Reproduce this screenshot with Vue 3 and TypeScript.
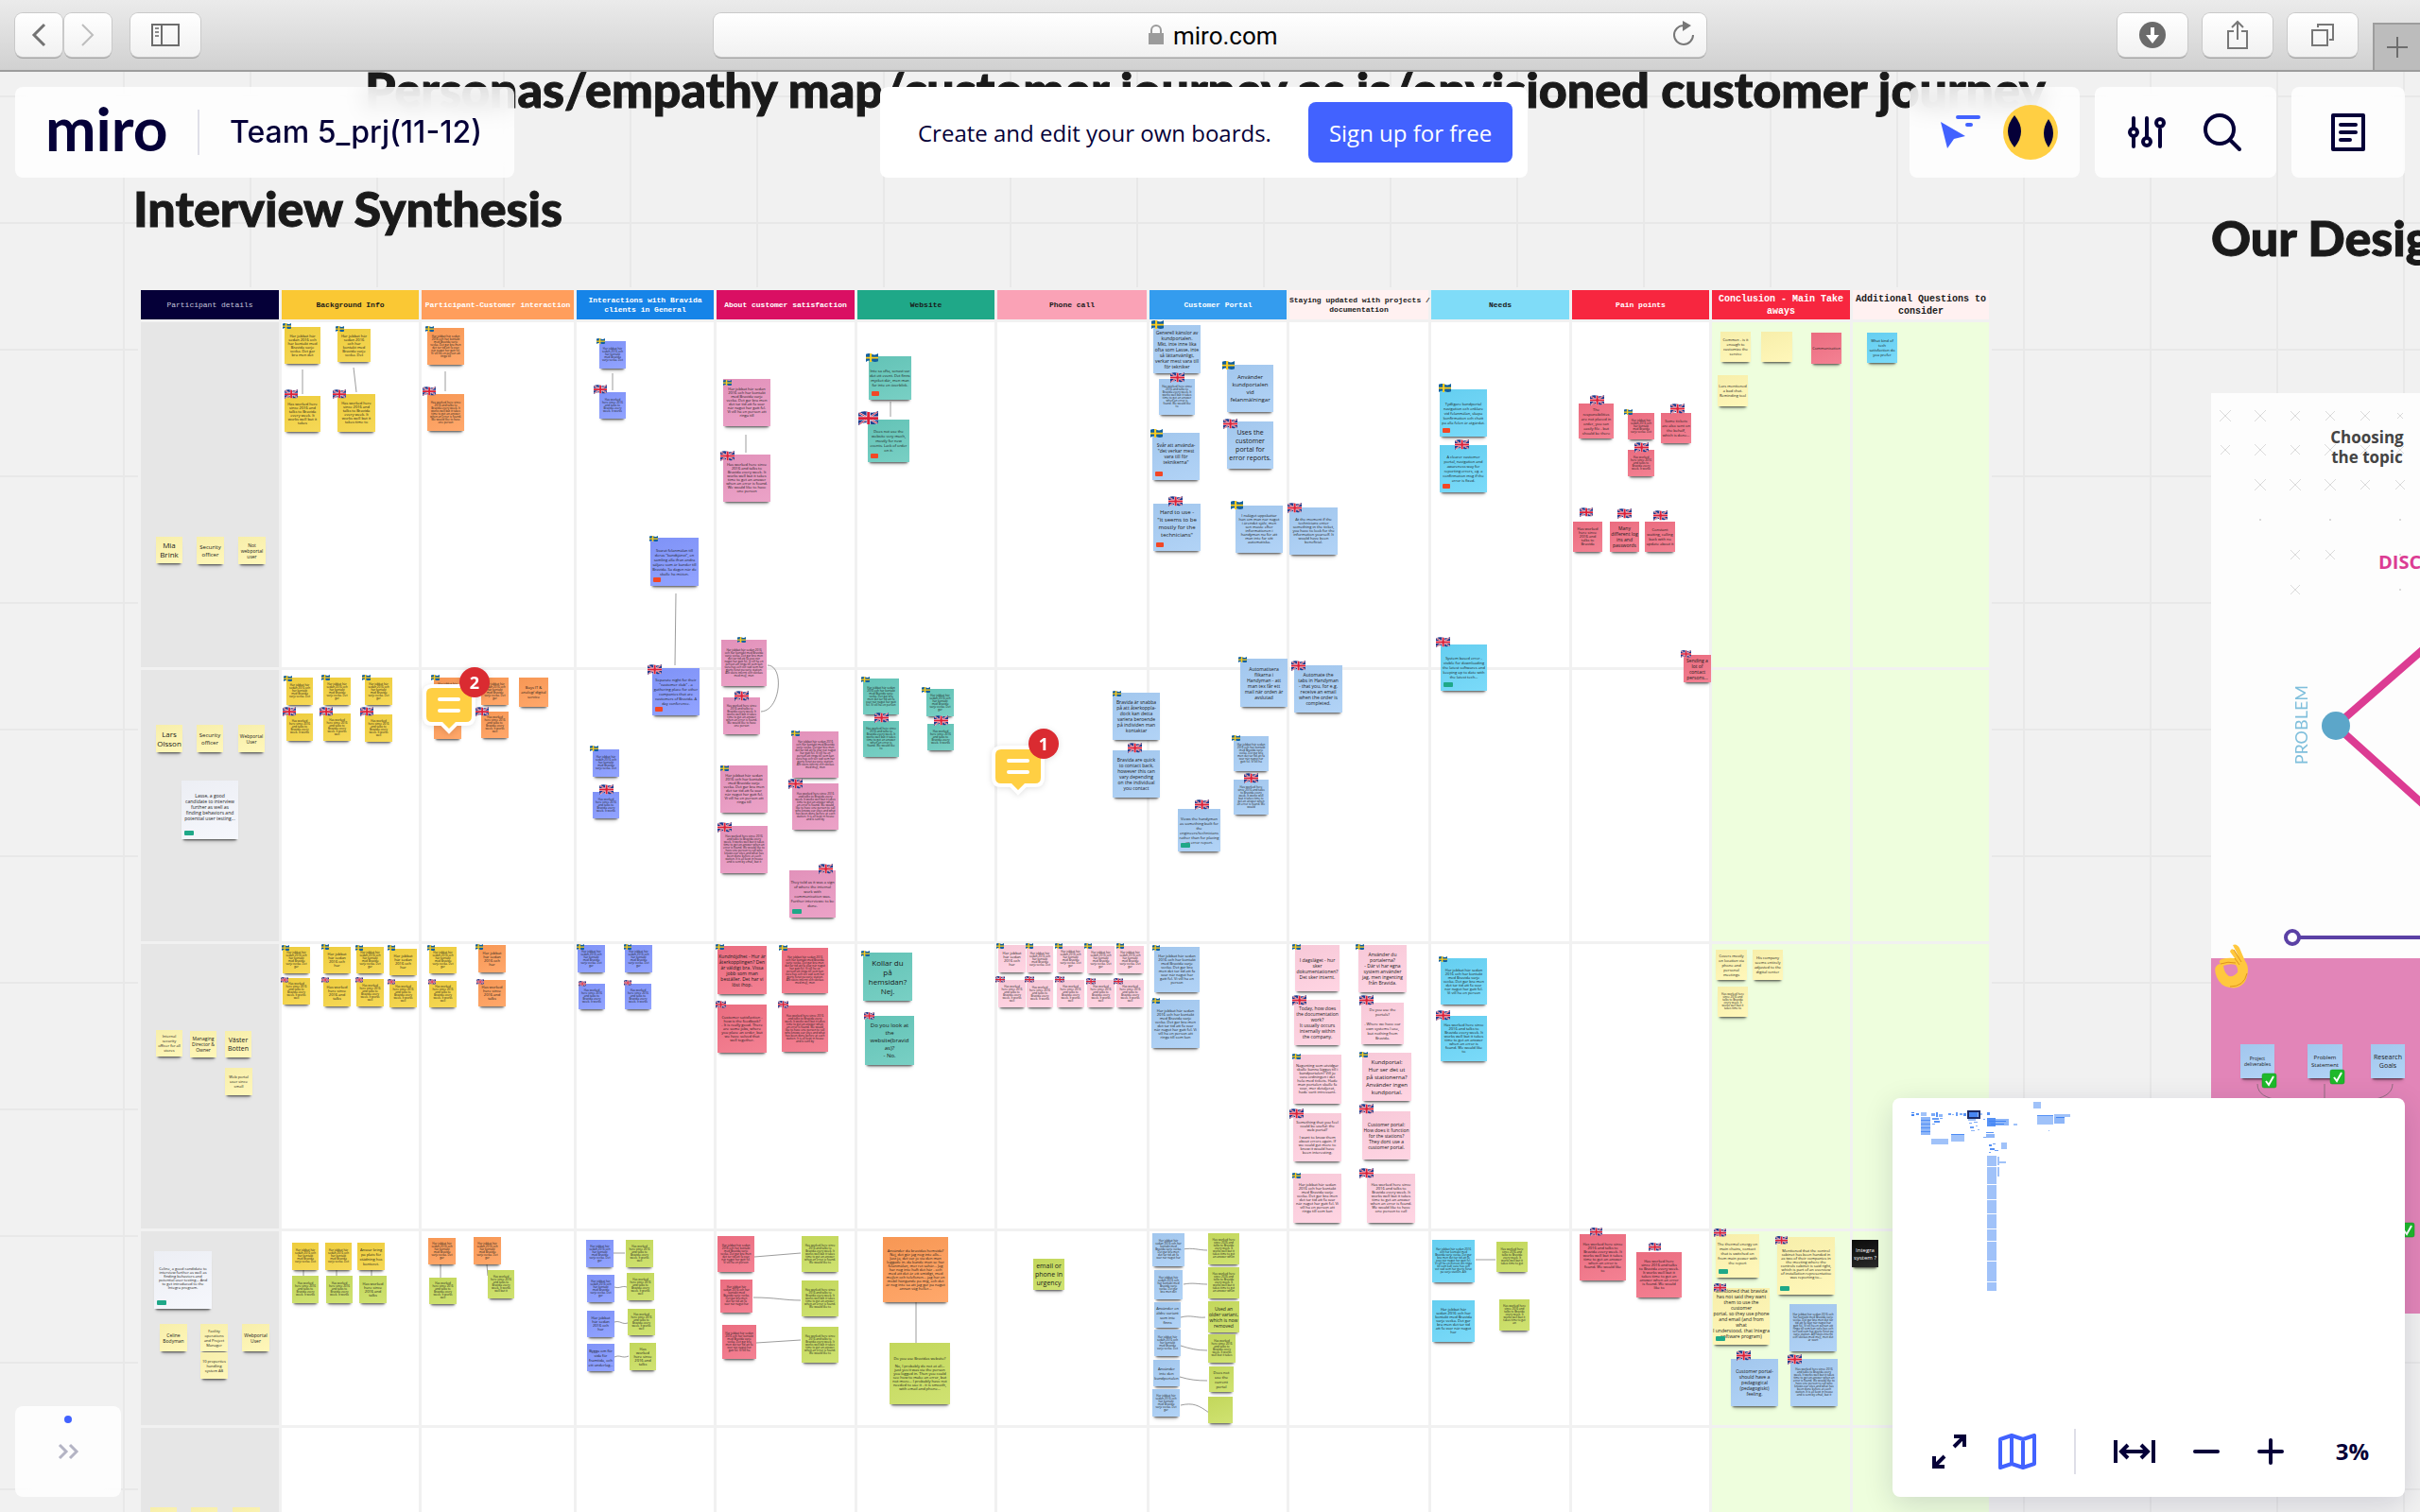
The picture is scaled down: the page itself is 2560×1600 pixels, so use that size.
<script setup lang="ts">
type Note = [x: number, y: number, w: number, h: number, color: string, size: number, text: string, tag?: string]
type Flag = [kind: 's' | 'g', x: number, y: number, w: number]

const columns = [
  { w: 149, label: ['Participant details'], cls: 'navy' },
  { w: 148, label: ['Background Info'], cls: 'gold' },
  { w: 164, label: ['Participant-Customer interaction'], cls: 'apricot' },
  { w: 148, label: ['Interactions with Bravida', 'clients in General'], cls: 'azure' },
  { w: 149, label: ['About customer satisfaction'], cls: 'magenta' },
  { w: 148, label: ['Website'], cls: 'emerald' },
  { w: 161, label: ['Phone call'], cls: 'salmon' },
  { w: 148, label: ['Customer Portal'], cls: 'sky' },
  { w: 150, label: ['Staying updated with projects /', 'documentation'], cls: 'blush' },
  { w: 149, label: ['Needs'], cls: 'aqua' },
  { w: 148, label: ['Pain points'], cls: 'crimson' },
  { w: 149, label: ['Conclusion - Main Take', 'aways'], cls: 'crimson large' },
  { w: 147, label: ['Additional Questions to', 'consider'], cls: 'blush large' },
]
const rowHeights = [368, 290, 304, 208, 200]

const sv = 'Har jobbat här sedan 2016 och har kontakt med Bravida varje vecka. Det går bra men det tar tid att få svar när något har gått fel. Vi vill ha en person att ringa till som kan våra hus och vet vad som har gjorts förut på varje station. Allt sköts internt och skickas med mejl, men det är svårt att hitta rätt när man letar efter en viss order.'
const en = 'Has worked here since 2016 and talks to Bravida every week. It works well but it takes time to get an answer when an error is found. We would like to have one person to call who knows our sites and what has been done before at each station. It is all kept in house and is sent by email, but it is hard to find the right one when you look for an order.'

const notes: Note[] = [
  // participants
  [165, 568, 28, 28, 'lemon', 8, 'Mia Brink'],
  [208, 568, 29, 29, 'lemon', 6, 'Security officer'],
  [252, 568, 29, 29, 'lemon', 5, 'Not webportal user'],
  [165, 767, 28, 29, 'lemon', 8, 'Lars Olsson'],
  [208, 767, 28, 29, 'lemon', 6, 'Security officer'],
  [252, 767, 28, 29, 'lemon', 5, 'Webportal User'],
  [192, 826, 60, 62, 'paper', 5, 'Lasse, a good\ncandidate to interview\nfurther as well as\nfinding behaviors and\npotential user testing...\n\n', 'green'],
  [165, 1090, 28, 28, 'lemon', 4, 'Internal security officer for all stores'],
  [201, 1091, 28, 28, 'lemon', 5, 'Managing Director & Owner'],
  [238, 1091, 28, 28, 'lemon', 7, 'Väster Botten'],
  [238, 1130, 29, 29, 'lemon', 4, 'Web portal user since small'],
  [163, 1324, 61, 61, 'paper', 4, 'Celine, a good candidate to\ninterview further as well as\nfinding behaviors and\npotential user testing... And\nto get introduced to the\nIntegra program.\n\n', 'green'],
  [169, 1401, 29, 29, 'lemon', 5, 'Celine Bodyman'],
  [212, 1401, 29, 29, 'lemon', 4, 'Facility operations and Project Manager'],
  [256, 1401, 29, 29, 'lemon', 5, 'Webportal User'],
  [212, 1431, 29, 28, 'lemon', 4, '10 properties handling system AB'],
  [159, 1595, 28, 28, 'lemon', 5, ''],
  [202, 1595, 28, 28, 'lemon', 5, ''],
  [246, 1595, 29, 28, 'lemon', 5, ''],
  // background info
  [301, 346, 38, 39, 'yellow', 4, '@s'], [357, 348, 35, 35, 'yellow', 4, '@s'],
  [301, 419, 38, 38, 'yellow', 4, '@e'], [357, 417, 40, 40, 'yellow', 4, '@e'],
  [303, 717, 28, 29, 'yellow', 3, '@s'], [342, 717, 29, 29, 'yellow', 3, '@s'], [386, 717, 29, 29, 'yellow', 3, '@s'],
  [303, 755, 28, 29, 'yellow', 3, '@e'], [342, 755, 29, 29, 'yellow', 3, '@e'], [386, 756, 29, 29, 'yellow', 3, '@e'],
  [299, 1002, 29, 28, 'yellow', 3, '@s'], [342, 1002, 29, 28, 'yellow', 4, '@s'], [377, 1002, 29, 28, 'yellow', 3, '@s'], [412, 1004, 29, 28, 'yellow', 4, '@s'],
  [299, 1035, 29, 28, 'yellow', 3, '@e'], [342, 1036, 29, 29, 'yellow', 4, '@e'], [377, 1036, 29, 29, 'yellow', 3, '@e'], [412, 1038, 29, 28, 'yellow', 3, '@e'],
  [309, 1315, 28, 29, 'yellow', 3, '@s'], [344, 1315, 28, 29, 'yellow', 3, '@s'], [378, 1315, 29, 29, 'yellow', 4, 'Ansvar kring på plats för städning hos kontoret.'],
  [309, 1350, 28, 29, 'lime', 3, '@e'], [345, 1350, 28, 29, 'lime', 3, '@e'], [380, 1350, 29, 29, 'lime', 4, '@e'],
  // participant-customer interaction
  [452, 347, 39, 39, 'orange', 3, '@s'], [452, 417, 39, 39, 'orange', 3, '@e'],
  [459, 717, 29, 29, 'orange', 3, '@s'], [509, 717, 29, 29, 'orange', 3, '@s'], [549, 717, 31, 31, 'orange', 4, 'Buys IT & analog/ digital service'],
  [459, 754, 29, 28, 'orange', 3, ''], [509, 753, 29, 28, 'orange', 3, '@e'],
  [454, 1002, 29, 28, 'yellow', 3, '@s'], [506, 1000, 29, 29, 'orange', 4, '@s'],
  [454, 1038, 29, 28, 'yellow', 3, '@e'], [506, 1037, 29, 28, 'orange', 4, '@e'],
  [453, 1310, 29, 28, 'orange', 3, '@s'], [501, 1309, 29, 29, 'orange', 3, '@s'],
  [454, 1352, 29, 28, 'lime', 3, '@e'], [516, 1344, 28, 30, 'lime', 3, '@e'],
  // interactions with clients
  [634, 361, 28, 29, 'violet', 3, '@s'], [634, 415, 28, 28, 'violet', 3, '@e'],
  [688, 569, 51, 51, 'violet', 4, 'Svarat felanmälan till deras "kundtjänst", en samling alla ifrån andra säljare som är kunder till Bravida. Så dagen när de skulle ha möten.', 'red'],
  [690, 707, 50, 50, 'violet', 4, 'Separate night for their "customer club" - a gathering place for other companies that are customers of Bravida. A day conference.', 'red'],
  [627, 793, 28, 29, 'violet', 3, '@s'], [627, 838, 28, 28, 'violet', 3, '@e'],
  [611, 1000, 29, 29, 'violet', 3, '@s'], [661, 1000, 29, 29, 'violet', 3, '@s'],
  [612, 1041, 28, 27, 'violet', 3, '@e'], [661, 1041, 28, 27, 'violet', 3, '@e'],
  [620, 1312, 29, 29, 'violet', 3, '@s'], [662, 1312, 29, 29, 'lime', 3, '@e'],
  [621, 1349, 29, 29, 'violet', 3, '@s'], [663, 1347, 29, 29, 'lime', 3, '@e'],
  [621, 1387, 29, 28, 'violet', 4, '@s'], [664, 1385, 29, 28, 'lime', 3, '@e'],
  [621, 1422, 29, 29, 'violet', 4, 'Bygga om för sida för framtida, och ett underlag...'], [666, 1421, 28, 29, 'lime', 4, '@e'],
  // customer satisfaction
  [765, 401, 50, 50, 'pink', 4, '@s'], [765, 481, 50, 50, 'pink', 4, '@e'],
  [763, 677, 48, 49, 'pink', 3, '@s'], [765, 738, 39, 39, 'pink', 3, '@e'],
  [838, 774, 49, 49, 'pink', 3, '@s'], [762, 810, 50, 50, 'pink', 4, '@s'],
  [838, 829, 49, 49, 'pink', 3, '@e'], [762, 874, 50, 50, 'pink', 3, '@e'],
  [835, 921, 49, 50, 'pink', 4, 'They told us it was a sign of where the internal work with communication was. Further interviews: to be done.', 'green'],
  [759, 1001, 52, 51, 'red', 5, 'Kundnöjdhet - Hur är återkopplingen? Den är väldigt bra. Vissa jobb som man beställer. Det har vi löst ihop.'],
  [827, 1003, 49, 48, 'red', 3, '@s'],
  [759, 1063, 52, 51, 'red', 4, 'Customer satisfaction -\nhow is the feedback?\n- It is really good. There\nare some jobs, where\nyou place an order, but\nwe have solved that\nwell together.'],
  [827, 1064, 49, 49, 'red', 3, '@e'],
  [759, 1308, 39, 38, 'red', 3, '@s'], [762, 1354, 34, 35, 'red', 3, '@s'], [764, 1402, 36, 36, 'red', 3, '@s'],
  [848, 1308, 39, 38, 'lime', 3, '@e'], [848, 1355, 39, 38, 'lime', 3, '@e'], [848, 1404, 39, 38, 'lime', 3, '@e'],
  // website
  [919, 377, 45, 46, 'teal', 4, 'Inte så ofta, senast var det ett event. Det finns mycket där, men man får inte en överblick.', 'red'], [918, 444, 44, 45, 'teal', 4, 'Does not use the website very much, mostly for new events. Lack of order on it.', 'red'],
  [913, 718, 38, 38, 'teal', 3, '@s'], [913, 763, 38, 38, 'teal', 3, '@e'],
  [980, 729, 29, 29, 'teal', 3, '@s'], [981, 766, 28, 28, 'teal', 3, '@e'],
  [913, 1008, 52, 51, 'teal', 8, 'Kollar du\npå\nhemsidan?\nNej.'],
  [915, 1075, 52, 52, 'teal', 6, 'Do you look at\nthe\nwebsite(bravid\nas)?\n- No.'],
  [934, 1309, 69, 69, 'orange', 4, 'Använder du bravidas hemsida?\nNej, det gör jag nog inte alls...\nJust ja, det var jo via den man loggade in. då kunde man se hur felanmälan, mer ret såhär... Jag har nog inte haft det här - och med att det är ett smidigt, med mejlen och telefonen... jag har en mobil hängande på mig, och det är nog inte så att jag går på något annan väg heller...'],
  [941, 1421, 64, 65, 'lime', 4, 'Do you use Bravidas website?\n\nNo, I probably do not at all... just yes it was via the person you logged in. Then you could see how to make an error, but not more... I probably have not needed to use it - it is smooth, with email and phone...'],
  // phone call
  [1056, 1000, 29, 29, 'rose', 4, '@s'], [1086, 1001, 28, 28, 'rose', 3, '@s'], [1118, 1001, 29, 28, 'rose', 3, '@s'], [1150, 1001, 29, 29, 'rose', 3, '@s'], [1181, 1001, 29, 29, 'rose', 3, '@s'],
  [1056, 1037, 29, 29, 'rose', 3, '@e'], [1086, 1037, 28, 29, 'rose', 3, '@e'], [1118, 1037, 29, 29, 'rose', 3, '@e'], [1150, 1037, 29, 29, 'rose', 3, '@e'], [1181, 1037, 29, 29, 'rose', 3, '@e'],
  [1093, 1332, 33, 33, 'lime', 7, 'email or\nphone in\nurgency'],
  // customer portal
  [1220, 344, 50, 51, 'blue', 5, 'Generell känslor av\nkundportalen.\nMkt, inte inne lika\nofta som Lasse, inte\nså lättanvänligt,\nverkar mest vara till\nför tekniker'],
  [1226, 401, 38, 38, 'blue', 3, '@e'],
  [1219, 458, 50, 50, 'blue', 5, 'Svår att använda-\n"det verkar mest\nvara till för\nteknikerna"\n\n', 'red'],
  [1220, 533, 50, 50, 'blue', 6, 'Hard to use -\n"it seems to be\nmostly for the\ntechnicians"\n\n', 'red'],
  [1298, 386, 49, 50, 'blue', 6, 'Använder\nkundportalen\nvid\nfelanmälningar'],
  [1298, 446, 49, 50, 'blue', 7, 'Uses the\ncustomer\nportal for\nerror reports.'],
  [1307, 535, 50, 50, 'blue', 4, 'I nuläget uppskattar han om man når något i ärendet själv, men sen måste efter informationen i handyman nu för att man inte får sitt automatiska.'],
  [1364, 537, 51, 50, 'blue', 4, 'At the moment if the technicians enter something in the ticket, you have to look for the information yourself. It would have been beneficial.'],
  [1312, 697, 50, 51, 'blue', 5, 'Automatisera\nflikarna i\nHandyman - att\nman tex får ett\nmail när orden är\navslutad'],
  [1369, 704, 51, 50, 'blue', 5, 'Automate the\ntabs in Handyman\n- that you, for e.g.\nreceive an email\nwhen the order is\ncompleted.'],
  [1177, 733, 50, 50, 'blue', 5, 'Bravida är snabba\npå att återkoppla-\ndock kan detta\nvariera beroende\npå individen man\nkontaktar'],
  [1177, 794, 50, 50, 'blue', 5, 'Bravida are quick\nto contact back,\nhowever this can\nvary depending\non the individual\nyou contact'],
  [1246, 856, 45, 45, 'blue', 4, 'Views the handyman as something built for the engineers/technicians rather than for placing an error report.', 'green'],
  [1305, 779, 37, 37, 'blue', 3, '@s'], [1305, 825, 37, 37, 'blue', 3, '@e'],
  [1221, 1002, 48, 48, 'blue', 4, '@s'], [1218, 1058, 51, 51, 'blue', 4, '@s'],
  [1219, 1305, 34, 35, 'blue', 3, '@s'], [1221, 1344, 30, 31, 'blue', 3, '@s'], [1221, 1378, 28, 27, 'blue', 4, 'Använder en äldre variant som inte finns'], [1221, 1407, 28, 28, 'blue', 3, '@s'], [1220, 1439, 28, 28, 'blue', 4, 'Använder inte den kundportalen'], [1219, 1470, 29, 29, 'blue', 3, '@s'],
  [1278, 1305, 33, 33, 'lime', 3, '@e'], [1278, 1341, 33, 33, 'lime', 3, '@e'], [1278, 1377, 33, 33, 'lime', 5, 'Used an\nolder variant,\nwhich is now\nremoved'], [1278, 1412, 29, 30, 'lime', 3, '@e'], [1279, 1446, 26, 27, 'lime', 4, 'Does not use the current portal'], [1278, 1478, 26, 28, 'lime', 3, ''],
  // staying updated
  [1370, 1000, 47, 49, 'rose', 5, 'I dagsläget - hur sker\ndokumentationen?\nDet sker internt.'],
  [1437, 1000, 51, 50, 'rose', 5, 'Använder du\nportalerna?\n- Där vi har egna\nsystem använder\njag, men ingenting\nfrån Bravida.'],
  [1369, 1058, 49, 48, 'rose', 5, 'Today, how does\nthe documentation\nwork?\nIt usually occurs\ninternally within\nthe company.'],
  [1440, 1061, 45, 44, 'rose', 4, 'Do you use the\nportals?\n\n- Where we have our\nown systems I use,\nbut nothing from\nBravida.'],
  [1368, 1116, 51, 52, 'rose', 4, 'Någonting som utvidgar skulle kunna läggas till i kundportalen? Vill ju vara ordningen i det hela med tickets. Hade man portalen skulle få svar, mer detaljerat, hade varit intressant.'],
  [1441, 1114, 52, 51, 'rose', 6, 'Kundportal:\nHur ser det ut\npå stationerna?\nAnvänder ingen\nkundportal.'],
  [1368, 1178, 51, 51, 'rose', 4, 'Something that you feel could be useful: the web portal?\n\nI want to know them about errors again. If we could get more to know it would have been interesting.'],
  [1441, 1176, 51, 51, 'rose', 5, 'Customer portal:\nHow does it function\nfor the stations?\nThey dont use a\ncustomer portal.'],
  [1368, 1242, 51, 52, 'rose', 4, '@s'], [1446, 1242, 51, 52, 'rose', 4, '@e'],
  // needs
  [1523, 412, 50, 50, 'cyan', 4, 'Tydligare kundportal navigation och enklare vid felanmälan, skapa konfirmation och chatt på alla felen är åtgärdat.', 'red'],
  [1523, 471, 50, 50, 'cyan', 4, 'A clearer customer portal, navigation and awareness way for reporting errors, eg. a confirmation msg if the error is fixed.', 'red'],
  [1524, 682, 49, 49, 'cyan', 4, 'System based error - visible for downloading the latest softwares and keeping up to date with the latest tech...', 'green'],
  [1524, 1014, 49, 49, 'cyan', 4, '@s'], [1524, 1075, 49, 48, 'cyan', 4, '@e'],
  [1515, 1312, 45, 45, 'cyan', 3, '@s'], [1515, 1376, 45, 44, 'cyan', 4, '@s'],
  [1583, 1314, 33, 32, 'lime', 3, '@e'], [1586, 1375, 32, 33, 'lime', 3, '@e'],
  // pain points
  [1670, 427, 37, 37, 'red', 4, 'The responsibilities are not placed in order, you can easily file - but should be there'],
  [1722, 437, 28, 28, 'red', 3, '@s'], [1757, 437, 32, 32, 'red', 4, 'Some tickets are also sent on the behalf, which is done...'], [1722, 476, 28, 28, 'red', 3, '@e'],
  [1664, 552, 31, 32, 'red', 4, '@e'], [1703, 552, 31, 32, 'red', 5, 'Many different log ins and passwords'], [1740, 552, 32, 32, 'red', 4, 'Constant waiting, calling back with no update about it'],
  [1781, 693, 29, 29, 'red', 5, 'Sending a lot of contact persons...'],
  [1671, 1306, 49, 49, 'red', 4, '@e'], [1731, 1325, 48, 48, 'red', 4, '@e'],
  // conclusions and questions
  [1820, 351, 32, 32, 'lemon', 4, 'Common - is it enough to customize the service'],
  [1863, 351, 33, 32, 'lemon', 4, ''], [1916, 352, 32, 33, 'red', 4, 'Communication'],
  [1975, 352, 32, 32, 'cyan', 4, 'What kind of tech satisfaction do you prefer'], [1817, 397, 32, 33, 'lemon', 4, 'Lars mentioned a bad chat. Reminding tool'],
  [1815, 1005, 33, 32, 'lemon', 4, 'Covers mostly on location via phone and personal meetings'], [1854, 1005, 32, 32, 'lemon', 4, 'His company seems entirely adjusted to the digital center'], [1817, 1044, 32, 32, 'lemon', 3, '@e'],
  [1815, 1306, 46, 46, 'lemon', 4, 'The thermal energy on main chains, contact that is switched on from main power with the report\n\n', 'green'],
  [1880, 1309, 61, 61, 'lemon', 4, 'Mentioned that the control cabinet has been handed in as two of their companies in the meeting where the controls cabinet is said right, which is part of an overview of installation representative was reporting to...\n\n', 'green'],
  [1812, 1363, 60, 60, 'lemon', 5, 'Mentioned that bravida\nhas not said they want\nthem to use the customer\nportal, so they use phone\nand email (and from what\nI understood, that Integra\nsoftware program)\n\n', 'green'],
  [1893, 1380, 50, 50, 'blue', 3, '@s'], [1831, 1438, 50, 50, 'blue', 5, 'Customer portal-\nshould have a\npedagogical\n(pedagogiskt)\nfeeling.'], [1894, 1438, 50, 50, 'blue', 3, '@e'],
  [1959, 1312, 28, 29, 'black', 6, 'Integra system ?'],
  // design process board
  [2370, 1105, 36, 36, 'blue', 5, 'Project\ndeliverables'], [2441, 1105, 37, 36, 'blue', 6, 'Problem\nStatement'], [2508, 1105, 36, 36, 'blue', 7, 'Research\nGoals'],
]

const flags: Flag[] = [
  ['s', 299, 342, 9], ['s', 355, 345, 9], ['s', 450, 345, 9], ['s', 631, 358, 9], ['s', 765, 402, 9], ['s', 687, 567, 9], ['s', 780, 674, 9],
  ['s', 300, 715, 9], ['s', 340, 714, 9], ['s', 383, 714, 9], ['s', 456, 714, 9],
  ['g', 301, 412, 14], ['g', 352, 412, 14], ['g', 447, 409, 14], ['g', 628, 407, 14], ['g', 762, 477, 15], ['g', 685, 703, 15], ['g', 777, 731, 15],
  ['g', 299, 748, 14], ['g', 338, 748, 14], ['g', 381, 748, 14], ['g', 503, 748, 14],
  ['s', 916, 374, 13], ['g', 908, 435, 21], ['s', 911, 716, 9], ['g', 925, 754, 15], ['s', 975, 727, 9], ['g', 988, 757, 15],
  ['s', 837, 773, 9], ['g', 834, 824, 15], ['s', 762, 810, 9], ['g', 759, 870, 15], ['g', 866, 914, 15],
  ['s', 1218, 339, 13], ['g', 1238, 394, 15], ['s', 1293, 382, 13], ['g', 1294, 443, 15], ['s', 1217, 454, 13], ['g', 1236, 525, 15], ['s', 1302, 530, 13], ['g', 1362, 532, 15],
  ['s', 1310, 695, 9], ['g', 1366, 699, 15], ['s', 1177, 731, 9], ['g', 1193, 786, 15], ['s', 1303, 778, 9], ['g', 1316, 818, 15], ['g', 1264, 846, 15],
  ['s', 1522, 406, 13], ['g', 1539, 465, 15], ['g', 1519, 674, 15],
  ['g', 1682, 418, 15], ['s', 1718, 433, 9], ['g', 1767, 427, 15], ['g', 1729, 468, 15], ['g', 1671, 537, 14], ['g', 1711, 538, 15], ['g', 1749, 540, 15], ['g', 1778, 688, 11],
  ['s', 624, 789, 9], ['g', 634, 830, 15],
  ['s', 298, 1000, 8], ['s', 340, 999, 8], ['s', 376, 1000, 8], ['s', 410, 1000, 8], ['s', 452, 1000, 8], ['s', 503, 999, 8], ['s', 610, 999, 8], ['s', 660, 999, 8],
  ['s', 757, 999, 9], ['s', 824, 1000, 9], ['s', 911, 1006, 9],
  ['g', 297, 1034, 8], ['g', 340, 1034, 8], ['g', 376, 1034, 8], ['g', 410, 1036, 8], ['g', 453, 1036, 8], ['g', 504, 1036, 8], ['g', 612, 1038, 8], ['g', 660, 1037, 8],
  ['g', 757, 1059, 11], ['g', 823, 1059, 11], ['g', 914, 1071, 11],
  ['s', 1054, 998, 8], ['s', 1085, 998, 8], ['s', 1116, 998, 8], ['s', 1147, 998, 8], ['s', 1181, 998, 8],
  ['g', 1053, 1033, 10], ['g', 1084, 1033, 10], ['g', 1116, 1033, 10], ['g', 1149, 1035, 10], ['g', 1178, 1035, 10],
  ['s', 1219, 1000, 8], ['s', 1219, 1056, 8],
  ['s', 1367, 999, 9], ['s', 1434, 999, 9], ['g', 1367, 1053, 15], ['g', 1438, 1053, 15], ['s', 1367, 1115, 9], ['s', 1438, 1113, 9],
  ['g', 1364, 1173, 15], ['g', 1438, 1168, 15], ['s', 1367, 1241, 9], ['g', 1438, 1236, 15], ['s', 1522, 1012, 9], ['g', 1519, 1069, 15],
  ['g', 1682, 1299, 13], ['g', 1744, 1315, 13], ['g', 1813, 1300, 13], ['g', 1878, 1308, 13], ['g', 1813, 1358, 13], ['g', 1837, 1429, 15], ['g', 1891, 1433, 15],
]

const links = [
  'M320 391V417', 'M374 389L377 415', 'M471 393V414', 'M648 395V413', 'M715 628L714 704', 'M789 460V479', 'M812 704C830 704 826 752 805 753',
  'M942 425V441', 'M321 1344V1350', 'M356 1344V1350', 'M393 1344V1350', 'M466 1338V1352', 'M515 1338L516 1350',
  'M649 1326H661', 'M650 1362C656 1364 658 1360 663 1362', 'M650 1399C656 1397 658 1402 664 1400', 'M650 1436C656 1433 658 1438 665 1435',
  'M798 1330L847 1326', 'M797 1373C820 1373 830 1376 847 1376', 'M800 1421L847 1418', 'M969 1378V1421',
  'M1251 1322C1262 1320 1268 1323 1277 1323', 'M1252 1359C1262 1357 1268 1359 1277 1359', 'M1249 1394C1260 1391 1266 1395 1275 1394',
  'M1249 1424C1258 1427 1266 1429 1277 1429', 'M1248 1457C1258 1460 1266 1461 1277 1461', 'M1249 1487C1262 1484 1268 1487 1279 1495', 'M1561 1333H1582',
  'M2388 1147C2388 1158 2398 1162 2410 1164', 'M2459 1147V1164', 'M2531 1147C2531 1158 2520 1162 2508 1164',
]

const crosses: [number, number, number][] = [
  [2354, 440, 6], [2391, 440, 6], [2428, 440, 5], [2465, 440, 5], [2502, 440, 5], [2539, 440, 3],
  [2354, 476, 5], [2391, 476, 6], [2428, 476, 5], [2465, 476, 6], [2502, 476, 5], [2539, 476, 4],
  [2391, 513, 6], [2428, 513, 6], [2465, 513, 6], [2502, 513, 5], [2539, 513, 5],
  [2391, 550, 1], [2465, 550, 1], [2539, 550, 1], [2428, 587, 5], [2465, 587, 5], [2539, 587, 1], [2428, 624, 5], [2539, 624, 1],
]
const crossPath = crosses.map(([x, y, r]) => `M${x - r} ${y - r}l${2 * r} ${2 * r}M${x + r} ${y - r}l${-2 * r} ${2 * r}`).join('')

const checks = [[2393, 1136], [2465, 1132], [2539, 1294]]
const comments = [
  { x: 445, y: 706, count: 2 },
  { x: 1047, y: 771, count: 1 },
]

// minimap blocks: x, y, width, height, opacity
const mapBlocks: [number, number, number, number, number][] = [
  [20, 15, 3, 1, 1], [20, 17, 3, 2, 1], [25, 16, 3, 2, .9], [30, 15, 6, 4, .5], [30, 20, 10, 19, .6], [30, 23, 10, 1, .8], [30, 27, 10, 1, .8], [30, 31, 10, 1, .8], [30, 35, 10, 1, .8],
  [41, 16, 4, 3, .7], [46, 15, 2, 5, .9], [49, 17, 4, 3, .6], [42, 21, 7, 2, .8], [44, 24, 6, 2, .9], [42, 27, 3, 1, .7], [50, 21, 3, 1, .7],
  [59, 16, 3, 2, .8], [63, 17, 2, 1, .6], [67, 15, 2, 4, .8], [71, 16, 3, 2, .7], [75, 16, 3, 3, .9],
  [81, 15, 9, 5, .9], [92, 16, 3, 2, .5], [80, 22, 8, 2, .5], [81, 26, 3, 1, .7], [86, 25, 4, 1, .7], [82, 30, 4, 2, .8], [88, 29, 2, 1, .6], [90, 33, 2, 1, .6], [83, 34, 4, 1, .6], [96, 22, 2, 1, .7],
  [100, 15, 3, 3, .9], [100, 21, 9, 9, .9], [109, 22, 14, 7, .6], [102, 24, 18, 1, 1], [104, 27, 14, 1, 1], [128, 27, 4, 2, .5],
  [41, 43, 18, 6, .5], [62, 38, 14, 8, .5], [62, 38, 14, 1, .9], [99, 36, 8, 1, .9], [99, 38, 9, 4, .6], [96, 41, 3, 1, .7],
  [102, 49, 3, 2, .9], [106, 48, 3, 1, .8], [103, 53, 5, 2, .9], [108, 55, 4, 1, .8], [102, 57, 2, 1, .8], [115, 47, 6, 7, .5],
  [149, 4, 8, 7, .5], [153, 18, 17, 10, .5], [153, 18, 17, 1, .8], [171, 17, 17, 3, .5], [171, 20, 11, 7, .6], [173, 20, 9, 1, 1], [165, 34, 1, 1, .6],
  [111, 62, 2, 9, .5], [113, 67, 7, 2, .5], [111, 73, 2, 10, .5],
  [100, 61, 10, 11, .5], [100, 73, 10, 18, .5], [100, 92, 10, 15, .5], [100, 108, 10, 14, .5], [100, 123, 10, 15, .5], [100, 139, 10, 12, .5], [100, 152, 10, 20, .5], [100, 173, 10, 21, .5], [100, 195, 10, 9, .5],
]

const isRunning = (text: string) => text === '@s' || text === '@e'

/** Fills a note with as much of its running text as the paper can hold. */
function noteText(n: Note): string {
  const [, , w, h, , size, text] = n
  if (!isRunning(text)) return text
  const source = text === '@s' ? sv : en
  const max = Math.floor((w - 6) / (size * 0.58)) * Math.floor((h - 6) / size) * 0.84
  return source.slice(0, source.lastIndexOf(' ', Math.min(max, source.length)))
}
const px = (v: number) => `${v}px`
</script>

<template>
  <div class="app">
    <svg class="defs" aria-hidden="true">
      <symbol id="flag-s" viewBox="0 0 16 11" preserveAspectRatio="none">
        <path fill="#12609f" d="M0 1Q4-1 8 1T16 0V10Q12 12 8 10T0 11z" />
        <path fill="#fccc1e" d="M5 0h2.600v11H5zM0 4.500h16v2.200H0z" />
      </symbol>
      <symbol id="flag-g" viewBox="0 0 22 15" preserveAspectRatio="none">
        <path fill="#1f3a8c" d="M0 2Q6-1 11 1T22 0V13Q16 15 11 13T0 15z" />
        <path stroke="#e9e9f4" stroke-width="2" d="M1 2l20 11M21 1L1 14" />
        <path stroke="#d8253b" stroke-width="1" d="M1 2l20 11M21 1L1 14" />
        <path fill="#f4f4fa" d="M9 1h4.400v13H9zM0 5.500h22v4H0z" />
        <path fill="#dc2038" d="M9.700 1h3v13h-3zM0 6.200h22V9H0z" />
      </symbol>
    </svg>

    <header class="browser">
      <div class="group left">
        <div class="pair">
          <button type="button" class="key narrow" aria-label="Back"><svg width="16" height="26" viewBox="0 0 16 26"><path d="M14 2L3 13l11 11" fill="none" stroke="#737373" stroke-width="3" /></svg></button>
          <button type="button" class="key narrow" aria-label="Forward"><svg width="16" height="26" viewBox="0 0 16 26"><path d="M2 2l11 11L2 24" fill="none" stroke="#bdbdbd" stroke-width="2" /></svg></button>
        </div>
        <button type="button" class="key" aria-label="Sidebar">
          <svg width="30" height="24" viewBox="0 0 30 24"><path d="M1 1h28v22H1zM11 1v22" fill="none" stroke="#6c6c6c" stroke-width="2" /><path d="M4 5h4M4 9h4M4 13h4" stroke="#8a8a8a" stroke-width="2" /></svg>
        </button>
      </div>
      <label class="address">
        <svg width="16" height="22" viewBox="0 0 16 22"><path d="M3 10V6a5 5 0 0 1 10 0v4" fill="none" stroke="#9b9b9b" stroke-width="2" /><path d="M0 9h16v12H0z" fill="#9b9b9b" /></svg>
        <input type="text" value="miro.com" aria-label="Address">
        <button type="button" class="reload" aria-label="Reload"><svg width="24" height="28" viewBox="0 0 24 28"><path d="M12 5a10 10 0 1 0 10 10" fill="none" stroke="#777" stroke-width="2" /><path d="M11 0l9 5-9 6z" fill="#777" /></svg></button>
      </label>
      <div class="group right">
        <button type="button" class="key" aria-label="Downloads"><svg width="28" height="28" viewBox="0 0 28 28"><circle cx="14" cy="14" r="14" fill="#6b6b6b" /><path d="M12 6h4v8h5l-7 9-7-9h5z" fill="#fff" /></svg></button>
        <button type="button" class="key" aria-label="Share"><svg width="24" height="32" viewBox="0 0 24 32"><path d="M8 12H2v18h20V12h-6M12 21V3M6 8l6-6 6 6" fill="none" stroke="#777" stroke-width="2" /></svg></button>
        <button type="button" class="key" aria-label="Tabs"><svg width="26" height="26" viewBox="0 0 26 26"><path d="M2 8h16v16H2zM8 5V2h16v16h-4" fill="none" stroke="#777" stroke-width="2" /></svg></button>
        <button type="button" class="new-tab" aria-label="New tab"><svg width="22" height="22" viewBox="0 0 22 22"><path d="M11 0v22M0 11h22" stroke="#6d6d6d" stroke-width="2" /></svg></button>
      </div>
    </header>

    <main class="board">
      <h2 class="frame-title title-a">Personas/empathy map/customer journey as is/envisioned customer journey</h2>
      <h2 class="frame-title title-b">Interview Synthesis</h2>
      <h2 class="frame-title title-c">Our Design Process</h2>

      <table class="synthesis">
        <colgroup><col v-for="c in columns" :key="c.label[0]" :style="{ width: px(c.w) }"></colgroup>
        <thead>
          <tr>
            <th v-for="c in columns" :key="c.label[0]" scope="col" :class="c.cls"><span v-for="l in c.label" :key="l">{{ l }}</span></th>
          </tr>
        </thead>
        <tbody>
          <tr v-for="(h, r) in rowHeights" :key="r" :style="{ height: px(h) }"><td v-for="c in columns" :key="c.label[0]" /></tr>
        </tbody>
      </table>

      <section class="diagram" aria-label="Design process">
        <div class="diamond" />
        <div class="plan" />
      </section>

      <svg class="overlay" aria-hidden="true">
        <path :d="crossPath" stroke="#dadada" stroke-width="1" fill="none" />
        <path d="M2640 620L2471 768L2640 920" fill="none" stroke="#dc3c93" stroke-width="8" />
        <circle cx="2471" cy="768" r="15" fill="#5ca6c9" />
        <path d="M2425 992H2700" stroke="#5b41a5" stroke-width="4" />
        <circle cx="2425" cy="992" r="7" fill="#fff" stroke="#5b41a5" stroke-width="4" />
        <path v-for="d in links" :key="d" :d="d" fill="none" stroke="#5a5a5a" stroke-opacity=".6" stroke-width="1" />
        <g transform="translate(2343 998)">
          <path fill="#ffc83d" fill-rule="evenodd" d="M19 2q4-2 7 3l6 14q3 4 3 10-1 9-4 13-6 7-15 5Q6 46 2 36-1 28 1 25q2-3 5-3-3-3 1-5 7-2 14-1l-5-7q1-4 4-2l5 7zM9 24q7-3 13-1 3 4 2 8-4 5-9 4-5-3-6-11z" />
          <path d="M6 22q8-3 16-1M21 16l5 7M16 46q15 0 18-14M20 7l8 13" fill="none" stroke="#de931f" stroke-width="1" />
        </g>
      </svg>
      <p class="topic">Choosing<br>the topic</p>
      <p class="discover">DISCOVER</p>
      <p class="problem">PROBLEM</p>

      <article v-for="(n, i) in notes" :key="i" class="note" :class="[n[4], 't' + n[5], { dense: isRunning(n[6]) || n[6].length > 140 }]" :style="{ left: px(n[0]), top: px(n[1]), width: px(n[2]), height: px(n[3]) }">
        <p v-if="n[6]">{{ noteText(n) }}</p>
        <i v-if="n[7]" class="tag" :class="n[7]" />
      </article>

      <svg class="overlay" aria-hidden="true">
        <use v-for="(f, i) in flags" :key="i" :href="'#flag-' + f[0]" :x="f[1]" :y="f[2]" :width="f[3]" :height="Math.round(f[3] * 0.7)" />
        <g v-for="(c, i) in checks" :key="'c' + i" :transform="`translate(${c[0]} ${c[1]})`">
          <rect width="15" height="15" rx="2" fill="#1fb92b" stroke="#0f9a1c" stroke-width=".5" /><path d="M4 8l3 4 5-9" fill="none" stroke="#fff" stroke-width="2" />
        </g>
      </svg>

      <button v-for="c in comments" :key="c.count" type="button" class="comment" :style="{ left: px(c.x), top: px(c.y) }">
        <svg width="60" height="76" viewBox="0 0 60 76"><path d="M12 22h36q6 0 6 6v24q0 6-6 6H37l-7 7-7-7H12q-6 0-6-6V28q0-6 6-6z" fill="#ffcf43" stroke="#fff" stroke-width="8" paint-order="stroke" /><path d="M20 34h20M20 46h20" stroke="#fff" stroke-width="4" stroke-linecap="round" /></svg>
        <b>{{ c.count }}</b>
      </button>
    </main>

    <nav class="toolbar">
      <div class="panel brand">
        <a href="#" class="logo">miro</a>
        <span class="rule" />
        <span class="name">Team 5_prj(11-12)</span>
      </div>
      <div class="panel promo">
        <span>Create and edit your own boards.</span>
        <button type="button" class="signup">Sign up for free</button>
      </div>
      <div class="tools">
        <div class="panel people">
          <button type="button" aria-label="Hide cursors"><svg width="44" height="40" viewBox="0 0 44 40"><path d="M1 9l26 15-12 3-7 10z" fill="#4262ff" /><path d="M19 4h22M29 12h4" stroke="#4262ff" stroke-width="4" stroke-linecap="round" /></svg></button>
          <button type="button" aria-label="Guest"><svg width="58" height="58" viewBox="0 0 58 58"><circle cx="29" cy="29" r="29" fill="#ffcf43" /><path d="M12 11q14 17 0 34-14-17 0-34zM48 15q10 15 0 30-10-15 0-30z" fill="#050038" /></svg></button>
        </div>
        <div class="panel actions">
          <button type="button" aria-label="Settings"><svg width="42" height="36" viewBox="0 0 42 36"><g fill="none" stroke="#050038" stroke-width="4" stroke-linecap="round"><path d="M7 3v10M7 23v10M21 3v21M35 15v18" /><circle cx="7" cy="18" r="4" /><circle cx="21" cy="28" r="4" /><circle cx="35" cy="8" r="4" /></g></svg></button>
          <button type="button" aria-label="Search"><svg width="42" height="42" viewBox="0 0 42 42"><g fill="none" stroke="#050038" stroke-width="4" stroke-linecap="round"><circle cx="18" cy="18" r="15" /><path d="M29 29l10 10" /></g></svg></button>
        </div>
        <div class="panel notes-button">
          <button type="button" aria-label="Notes"><svg width="36" height="40" viewBox="0 0 36 40"><path d="M2 2h32v36H2z" fill="none" stroke="#050038" stroke-width="4" stroke-linejoin="round" /><path d="M10 12h16M10 20h16M10 28h10" stroke="#050038" stroke-width="4" stroke-linecap="round" /></svg></button>
        </div>
      </div>
    </nav>

    <button type="button" class="panel expand" aria-label="Show frames">
      <i />
      <svg width="24" height="20" viewBox="0 0 24 20"><path d="M3 3l7 7-7 7M14 3l7 7-7 7" fill="none" stroke="#b4b4c4" stroke-width="3" /></svg>
    </button>

    <aside class="minimap">
      <svg class="map" viewBox="0 0 542 320" width="542" height="320">
        <rect v-for="(b, i) in mapBlocks" :key="i" :x="b[0]" :y="b[1]" :width="b[2]" :height="b[3]" fill="#4285f4" :fill-opacity="b[4]" />
        <rect x="80" y="14" width="12" height="7" fill="#3b7cf0" fill-opacity=".5" stroke="#1c2b66" stroke-width="2" />
      </svg>
      <div class="controls">
        <div class="view-modes">
          <button type="button" aria-label="Full screen"><svg width="36" height="36" viewBox="0 0 36 36"><path d="M23 2h11v11M34 2L23 13M2 23v11h11M2 34l11-11" fill="none" stroke="#050038" stroke-width="4" /></svg></button>
          <button type="button" aria-label="Map"><svg width="40" height="38" viewBox="0 0 40 38"><path d="M2 6l12-4 12 4 12-4v30l-12 4-12-4-12 4zM14 2v30M26 6v30" fill="none" stroke="#4262ff" stroke-width="4" stroke-linejoin="round" /></svg></button>
        </div>
        <div class="zoom-modes">
          <span class="rule" />
          <button type="button" aria-label="Fit to screen"><svg width="44" height="24" viewBox="0 0 44 24"><path d="M2 0v24M42 0v24M8 12h28M15 5l-7 7 7 7M29 5l7 7-7 7" fill="none" stroke="#050038" stroke-width="4" /></svg></button>
          <button type="button" aria-label="Zoom out"><svg width="28" height="28" viewBox="0 0 28 28"><path d="M2 14h24" stroke="#050038" stroke-width="4" stroke-linecap="round" /></svg></button>
          <button type="button" aria-label="Zoom in"><svg width="28" height="28" viewBox="0 0 28 28"><path d="M2 14h24M14 2v24" stroke="#050038" stroke-width="4" stroke-linecap="round" /></svg></button>
        </div>
        <button type="button" class="zoom">3%</button>
      </div>
    </aside>
  </div>
</template>

<style>
html, body { margin: 0; overflow: hidden; }
</style>

<style scoped>
.app { position: relative; height: 100vh; overflow: hidden; background: #f1f1f1; font-family: "Open Sans", "Noto Sans", sans-serif; color: #050038; }
button { border: 0; padding: 0; margin: 0; background: none; font: inherit; color: inherit; display: flex; align-items: center; justify-content: center; }
p, h2 { margin: 0; }
.defs { position: absolute; width: 0; height: 0; }

.browser { position: relative; z-index: 3; display: grid; grid-template-columns: 1fr 41% 1fr; align-items: center; box-sizing: border-box; height: 76px; border-bottom: 2px solid #9c9c9c; background: linear-gradient(#ebebeb, #d1d1d1); }
.group { display: flex; align-items: center; }
.left { gap: 20px; padding-left: 16px; }
.pair { display: flex; gap: 2px; }
.right { justify-content: flex-end; gap: 16px; align-self: stretch; }
.key { width: 74px; height: 46px; border-radius: 8px; background: linear-gradient(#fff, #f1f1f1); box-shadow: 0 0 0 1px #c9c9c9, 0 2px 0 #a5a5a5; }
.narrow { width: 50px; }
.new-tab { width: 50px; align-self: flex-end; height: 50px; box-sizing: border-box; border-top: 2px solid #9d9d9d; border-left: 2px solid #9d9d9d; background: #bcbcbc; }
.address { position: relative; display: flex; align-items: center; justify-content: center; gap: 10px; height: 46px; padding-left: 8px; border-radius: 8px; background: linear-gradient(#fff, #f1f1f1); box-shadow: 0 0 0 1px #c9c9c9, 0 2px 0 #a5a5a5; }
.address input { width: 112px; border: 0; padding: 2px 0 0; background: none; font: 26px/32px Roboto, sans-serif; color: #000; }
.reload { position: absolute; right: 12px; top: 8px; }

.board { position: absolute; inset: 0; overflow: hidden; background-image: linear-gradient(90deg, #e8e8e8 2px, transparent 2px), linear-gradient(#e8e8e8 2px, transparent 2px); background-size: 134px 134px; background-position: 130px 0, 0 101px; }
.frame-title { position: absolute; white-space: nowrap; color: #1a1a1a; font: 900 52px/60px Lato, "Open Sans", sans-serif; -webkit-text-stroke: 1px #1a1a1a; }
.title-a { left: 386px; top: 64px; }
.title-b { left: 141px; top: 190px; }
.title-c { left: 2339px; top: 221px; }

.synthesis { position: absolute; left: 146px; top: 304px; width: 1960px; table-layout: fixed; border-collapse: collapse; }
.synthesis th, .synthesis td { padding: 0; border: 3px solid #f1f1f1; }
.synthesis th { height: 31px; font: bold 8px/10px "Liberation Mono", monospace; color: #fff; white-space: nowrap; }
.synthesis th span { display: block; }
.synthesis th.large { font-size: 10px; line-height: 13px; }
.synthesis td { background: #fff; }
.synthesis td:first-child { background: #e6e6e6; }
.synthesis td:nth-child(n + 12) { background: #eefedd; }
.synthesis th.navy { background: #050038; font-weight: normal; color: #c4c4d8; }
.synthesis th.gold { background: #fac834; color: #1a1a1a; }
.synthesis th.apricot { background: #ff9e5c; }
.synthesis th.azure { background: #1684e8; }
.synthesis th.magenta { background: #da0f63; }
.synthesis th.emerald { background: #1fa888; color: #1a1a1a; }
.synthesis th.salmon { background: #faa2b6; color: #1a1a1a; }
.synthesis th.sky { background: #349cee; }
.synthesis th.blush { background: #fff1f1; color: #1a1a1a; }
.synthesis th.aqua { background: #7fdcf8; color: #1a1a1a; }
.synthesis th.crimson { background: #f7263f; }

.diagram { position: absolute; left: 2339px; right: 0; top: 416px; }
.diamond { height: 598px; background: #fdfdfd; }
.plan { height: 376px; background: #e285b8; }
.overlay { position: absolute; inset: 0; width: 100%; height: 100%; pointer-events: none; }
.topic { position: absolute; left: 2464px; top: 452px; width: 80px; text-align: center; white-space: nowrap; color: #444; font: bold 17px/21px "Open Sans", sans-serif; }
.discover { position: absolute; left: 2516px; top: 583px; color: #dc3c93; font: bold 20px/24px "Open Sans", sans-serif; }
.problem { position: absolute; left: 2422px; top: 725px; color: #7fbfdc; font: 18px/24px Lato, sans-serif; writing-mode: vertical-rl; transform: rotate(180deg); }

.note { position: absolute; box-sizing: border-box; display: flex; align-items: center; justify-content: center; padding: 1px 3px; text-align: center; font-weight: 500; color: #1a1a1a; background-image: linear-gradient(160deg, rgba(0, 0, 0, .03), rgba(255, 255, 255, .12)); box-shadow: 0 3px 2px -2px rgba(0, 0, 0, .6), 0 5px 4px -3px rgba(0, 0, 0, .25); }
.note p { flex: 1; min-width: 0; white-space: pre-line; }
.t3 { font-size: 3px; line-height: 3px; }
.t4 { font-size: 4px; line-height: 5px; padding: 1px; }
.t4.dense { line-height: 4px; padding: 1px 3px; }
.t5 { font-size: 5px; line-height: 6px; padding: 0; }
.t6 { font-size: 6px; line-height: 8px; padding: 0; }
.t7 { font-size: 7px; line-height: 9px; padding: 0; }
.t8 { font-size: 8px; line-height: 10px; padding: 0; }
.lemon { background-color: #fff6b0; }
.yellow { background-color: #f5d33f; }
.orange { background-color: #ff9c57; }
.violet { background-color: #8397ff; }
.pink { background-color: #e996c0; }
.rose { background-color: #ffcfdf; }
.teal { background-color: #66c9bc; }
.blue { background-color: #a7cdf5; }
.cyan { background-color: #68d5f8; }
.red { background-color: #f27084; }
.lime { background-color: #c9de5e; }
.paper { background-color: #f4f6fc; }
.black { background-color: #0c0c0c; color: #fff; }
.tag { position: absolute; left: 3px; bottom: 4px; width: 8px; height: 5px; border-radius: 1px; background: #f24726; }
.tag.green { width: 10px; background: #1fa888; }

.comment { position: absolute; width: 60px; height: 76px; filter: drop-shadow(0 1px 3px rgba(0, 0, 0, .12)); }
.comment b { position: absolute; left: 41px; top: 0; width: 32px; height: 32px; border-radius: 50%; background: #da2b31; color: #fff; text-align: center; font: bold 18px/32px "Open Sans", sans-serif; }

.toolbar { position: relative; z-index: 2; display: grid; grid-template-columns: 1fr auto 1fr; padding: 16px 16px 0; }
.panel { display: flex; align-items: center; box-sizing: border-box; height: 96px; border-radius: 8px; background: rgba(255, 255, 255, .84); backdrop-filter: blur(12px); }
.brand { justify-self: start; width: 528px; padding-left: 32px; }
.logo { width: 161px; margin-bottom: 8px; color: #050038; text-decoration: none; font: bold 64px/72px Lato, sans-serif; }
.rule { width: 2px; height: 48px; background: #dfdfe8; }
.brand .name { padding-left: 32px; font: 500 32px/40px Inter, sans-serif; }
.promo { width: 685px; margin-right: 13px; justify-content: space-between; padding: 0 16px 0 40px; background: #fff; font-size: 24px; white-space: nowrap; }
.signup { width: 216px; height: 64px; border-radius: 8px; background: #4262ff; color: #fff; font-size: 24px; }
.tools { justify-self: end; display: flex; gap: 16px; }
.people { width: 180px; justify-content: space-between; padding: 0 23px 0 32px; }
.actions { width: 192px; justify-content: space-between; padding: 0 36px 0 34px; }
.notes-button { width: 120px; justify-content: center; }

.expand { position: absolute; z-index: 2; left: 16px; bottom: 16px; width: 112px; justify-content: center; }
.expand i { position: absolute; top: 10px; width: 8px; height: 8px; border-radius: 50%; background: #4262ff; }
.minimap { position: absolute; z-index: 2; right: 16px; bottom: 16px; width: 542px; height: 422px; display: flex; flex-direction: column; justify-content: space-between; border-radius: 8px; background: #fff; box-shadow: 0 8px 32px rgba(5, 0, 56, .14); }
.controls { display: flex; align-items: center; height: 96px; padding: 0 38px 0 42px; gap: 40px; }
.view-modes { display: flex; align-items: center; gap: 34px; }
.zoom-modes { display: flex; align-items: center; gap: 40px; }
.zoom { margin-left: auto; font: bold 24px/32px "Open Sans", sans-serif; }
</style>
